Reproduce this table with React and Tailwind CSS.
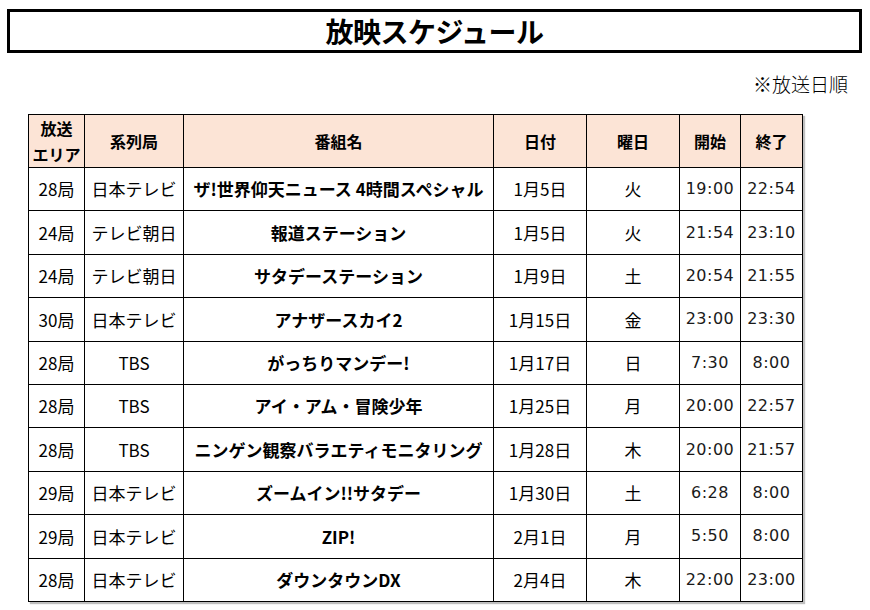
import React from "react";

const rows = [
  ["28局", "日本テレビ", "ザ!世界仰天ニュース 4時間スペシャル", "1月5日", "火", "19:00", "22:54"],
  ["24局", "テレビ朝日", "報道ステーション", "1月5日", "火", "21:54", "23:10"],
  ["24局", "テレビ朝日", "サタデーステーション", "1月9日", "土", "20:54", "21:55"],
  ["30局", "日本テレビ", "アナザースカイ2", "1月15日", "金", "23:00", "23:30"],
  ["28局", "TBS", "がっちりマンデー!", "1月17日", "日", "7:30", "8:00"],
  ["28局", "TBS", "アイ・アム・冒険少年", "1月25日", "月", "20:00", "22:57"],
  ["28局", "TBS", "ニンゲン観察バラエティモニタリング", "1月28日", "木", "20:00", "21:57"],
  ["29局", "日本テレビ", "ズームイン!!サタデー", "1月30日", "土", "6:28", "8:00"],
  ["29局", "日本テレビ", "ZIP!", "2月1日", "月", "5:50", "8:00"],
  ["28局", "日本テレビ", "ダウンタウンDX", "2月4日", "木", "22:00", "23:00"],
];

const jp = { fontFamily: '"Noto Sans CJK JP", sans-serif' };
const tm = { fontFamily: '"DejaVu Sans", "Noto Sans CJK JP", sans-serif' };

export default function App() {
  return (
    <div className="w-[870px] h-[610px] bg-white pt-[9px] text-black" style={jp}>
      <div className="ml-[7px] w-[855px] h-[44px] border-[3px] border-black flex items-center justify-center">
        <span className="text-[28px] font-bold leading-none tracking-[-0.5px]">放映スケジュール</span>
      </div>
      <div className="mt-[21px] h-[20px] flex justify-end pr-[22px] text-[19px] leading-[20px] font-light">
        ※放送日順
      </div>
      <table className="mt-[20px] ml-[28px] border-collapse table-fixed w-[774px] shadow-[2px_2px_1px_rgba(0,0,0,0.25)]">
        <colgroup>
          <col className="w-[56px]" />
          <col className="w-[99px]" />
          <col className="w-[310px]" />
          <col className="w-[93px]" />
          <col className="w-[93px]" />
          <col className="w-[61px]" />
          <col className="w-[62px]" />
        </colgroup>
        <thead>
          <tr className="h-[52px] bg-[#fce4d6] text-[16px] font-bold">
            <th className="border border-black leading-[26px] p-0">放送<br />エリア</th>
            <th className="border border-black p-0">系列局</th>
            <th className="border border-black p-0">番組名</th>
            <th className="border border-black p-0">日付</th>
            <th className="border border-black p-0">曜日</th>
            <th className="border border-black p-0">開始</th>
            <th className="border border-black p-0">終了</th>
          </tr>
        </thead>
        <tbody>
          {rows.map((r, i) => (
            <tr key={i} className="h-[43.4px] text-[17px]">
              <td className="border border-black text-center p-0">{r[0]}</td>
              <td className="border border-black text-center p-0">{r[1]}</td>
              <td className="border border-black text-center p-0 font-bold">{r[2]}</td>
              <td className="border border-black text-center p-0">{r[3]}</td>
              <td className="border border-black text-center p-0">{r[4]}</td>
              <td className="border border-black text-center p-0 text-[16px] font-normal tracking-[0.5px] text-[#1a1a1a]" style={tm}>{r[5]}</td>
              <td className="border border-black text-center p-0 text-[16px] font-normal tracking-[0.5px] text-[#1a1a1a]" style={tm}>{r[6]}</td>
            </tr>
          ))}
        </tbody>
      </table>
    </div>
  );
}
